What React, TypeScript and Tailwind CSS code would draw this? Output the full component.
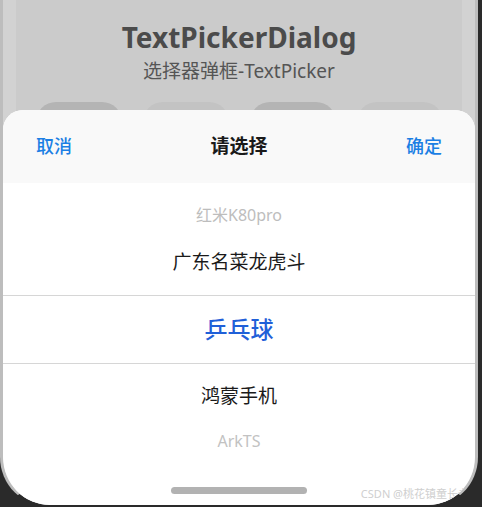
import React from 'react';

const font = { fontFamily: '"Noto Sans", "Noto Sans CJK SC", sans-serif' };

const bgButtons = ['bg-[#b4b4b4]', 'bg-[#c3c3c3]', 'bg-[#b4b4b4]', 'bg-[#c3c3c3]'];

export default function App() {
  return (
    <div className="flex w-[482px] h-[507px] overflow-hidden bg-[#2a2a2a]" style={font}>
      <div className="relative w-[478px] h-[507px] overflow-hidden rounded-b-[50px] border-x-[3px] border-b-[2px] border-[#bdbdbd] border-b-[#2a2a2a] bg-[#d2d2d2]">
        {/* page behind the dialog */}
        <div className="mx-[13px] h-full bg-[#cbcbcb] pt-[19px] flex flex-col items-center">
          <h1 className="text-[28px] leading-[36px] font-bold text-[#4b4b4b]">TextPickerDialog</h1>
          <p className="mt-[4px] text-[19px] leading-[24px] text-[#555555]">选择器弹框-TextPicker</p>
          <div className="mt-[19px] flex gap-[21px]">
            {bgButtons.map((c, i) => (
              <div key={i} className={`w-[86px] h-[40px] rounded-full ${c}`} />
            ))}
          </div>
        </div>

        {/* bottom sheet */}
        <div className="absolute top-[110px] left-0 right-0 bottom-0 flex flex-col overflow-hidden rounded-t-[20px] rounded-b-[46px] bg-white">
          <div className="flex h-[73px] items-center justify-between bg-[#f9f9f9] px-[33px]">
            <button className="text-[18px] font-medium text-[#1b7fe4]">取消</button>
            <span className="text-[19px] font-bold text-[#1a1a1a]">请选择</span>
            <button className="text-[18px] font-medium text-[#1b7fe4]">确定</button>
          </div>

          <div className="flex flex-col pt-[8px] text-center">
            <div className="flex h-[48px] items-center justify-center text-[16px] text-[#bdbdbd]">红米K80pro</div>
            <div className="flex h-[56px] items-center justify-center pb-[9px] text-[19px] text-[#1a1a1a]">广东名菜龙虎斗</div>
            <div className="h-px bg-[#d6d6d6]" />
            <div className="flex h-[67px] items-center justify-center text-[23px] font-medium text-[#1f60d8]">乒乓球</div>
            <div className="h-px bg-[#d6d6d6]" />
            <div className="flex h-[56px] items-center justify-center pt-[9px] text-[19px] text-[#1a1a1a]">鸿蒙手机</div>
            <div className="flex h-[42px] items-center justify-center text-[16px] text-[#c2c2c2]">ArkTS</div>
          </div>

          <div className="mt-[25px] flex justify-center">
            <div className="h-[7px] w-[136px] rounded-full bg-[#b2b2b2]" />
          </div>
        </div>

        <span className="absolute bottom-[3px] right-[6px] text-[11px] text-[#cfcfcf]">CSDN @桃花镇童长老</span>
      </div>
    </div>
  );
}
